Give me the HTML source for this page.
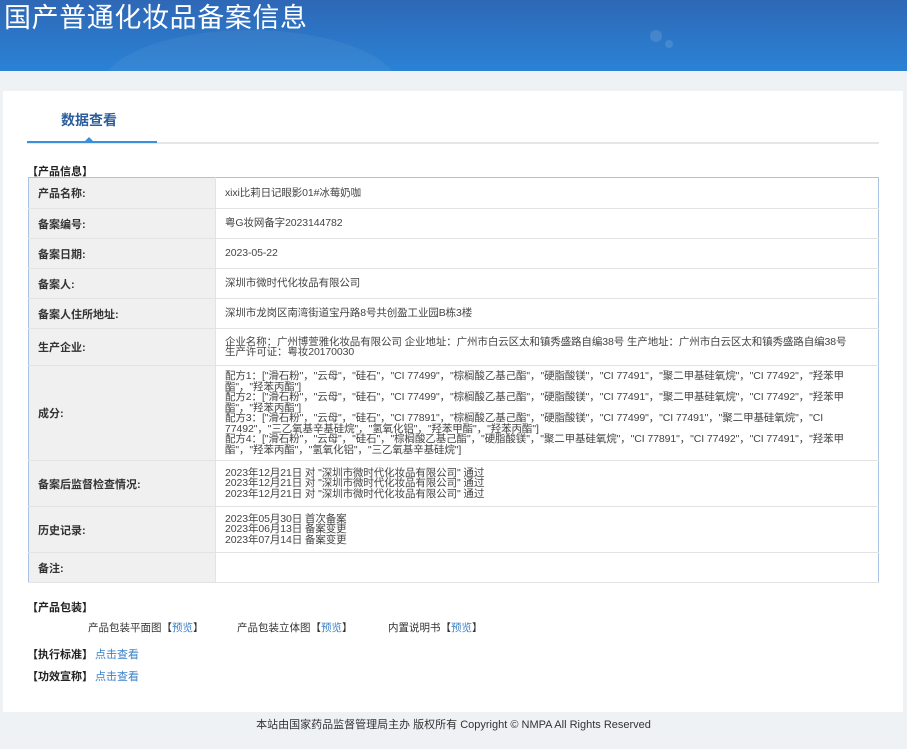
<!DOCTYPE html>
<html><head><meta charset="utf-8">
<style>
*{margin:0;padding:0;box-sizing:border-box}
body{width:907px;height:749px;background:#eff2f5;font-family:"Liberation Sans","Noto Sans CJK SC",sans-serif;color:#333;position:relative;overflow:hidden}
.hdr{position:absolute;left:0;top:0;width:907px;height:71px;background:linear-gradient(180deg,#2e67b6 0%,#2c78c9 60%,#2a82d4 100%);overflow:hidden}
.hdr h1{position:absolute;left:4px;top:-2px;font-size:27px;line-height:36px;font-weight:normal;color:#fff;letter-spacing:0.6px;font-family:"Noto Sans CJK SC",sans-serif}
.blob{position:absolute;border-radius:50%;background:rgba(255,255,255,0.05)}
.panel{position:absolute;left:3px;top:91px;width:900px;height:621px;background:#fff}
.tab{position:absolute;left:61px;top:110px;font-size:14px;font-weight:bold;color:#2c5d9b}
.tl{position:absolute;left:27px;top:142px;width:852px;height:2px;background:#e6e6e6}
.tb{position:absolute;left:27px;top:141px;width:130px;height:2px;background:#3c8fdb}
.tri{position:absolute;left:85px;top:137px;width:0;height:0;border-left:4px solid transparent;border-right:4px solid transparent;border-bottom:4px solid #3c8fdb}
.sec{position:absolute;font-size:11px;font-weight:bold;color:#222}
table{position:absolute;left:28px;top:177px;width:851px;border-collapse:collapse;border:1px solid #a8c3e6;font-size:10.5px}
td{border-bottom:1px solid #e3e3e3;vertical-align:middle}
td.l{width:187px;background:#f0f0f0;font-weight:bold;padding-left:9px;color:#333;font-size:11px;border-right:1px solid #e3e3e3}
td.v{padding-left:9px;padding-right:20px;color:#444;line-height:10.5px;letter-spacing:-0.1px}
a{color:#3b82c8;text-decoration:none}
.foot{position:absolute;top:716px;left:0;width:907px;text-align:center;font-size:11px;color:#333}
</style></head><body>
<div class="hdr"><div class="blob" style="left:100px;top:30px;width:300px;height:120px"></div><div class="blob" style="left:650px;top:30px;width:12px;height:12px;background:rgba(255,255,255,0.12)"></div><div class="blob" style="left:665px;top:40px;width:8px;height:8px;background:rgba(255,255,255,0.12)"></div><h1>国产普通化妆品备案信息</h1></div>
<div class="panel"></div>
<div class="tab">数据查看</div>
<div class="tl"></div><div class="tb"></div><div class="tri"></div>
<div class="sec" style="left:27px;top:163px">【产品信息】</div>
<table>
<tr style="height:31px"><td class="l">产品名称:</td><td class="v">xixi比莉日记眼影01#冰莓奶咖</td></tr>
<tr style="height:30px"><td class="l">备案编号:</td><td class="v">粤G妆网备字2023144782</td></tr>
<tr style="height:30px"><td class="l">备案日期:</td><td class="v">2023-05-22</td></tr>
<tr style="height:30px"><td class="l">备案人:</td><td class="v">深圳市微时代化妆品有限公司</td></tr>
<tr style="height:30px"><td class="l">备案人住所地址:</td><td class="v">深圳市龙岗区南湾街道宝丹路8号共创盈工业园B栋3楼</td></tr>
<tr style="height:37px"><td class="l">生产企业:</td><td class="v">企业名称：广州博萱雅化妆品有限公司 企业地址：广州市白云区太和镇秀盛路自编38号 生产地址：广州市白云区太和镇秀盛路自编38号 生产许可证：粤妆20170030</td></tr>
<tr style="height:95px"><td class="l">成分:</td><td class="v">配方1：["滑石粉"，"云母"，"硅石"，"CI 77499"，"棕榈酸乙基己酯"，"硬脂酸镁"，"CI 77491"，"聚二甲基硅氧烷"，"CI 77492"，"羟苯甲酯"，"羟苯丙酯"]<br>配方2：["滑石粉"，"云母"，"硅石"，"CI 77499"，"棕榈酸乙基己酯"，"硬脂酸镁"，"CI 77491"，"聚二甲基硅氧烷"，"CI 77492"，"羟苯甲酯"，"羟苯丙酯"]<br>配方3：["滑石粉"，"云母"，"硅石"，"CI 77891"，"棕榈酸乙基己酯"，"硬脂酸镁"，"CI 77499"，"CI 77491"，"聚二甲基硅氧烷"，"CI 77492"，"三乙氧基辛基硅烷"，"氢氧化铝"，"羟苯甲酯"，"羟苯丙酯"]<br>配方4：["滑石粉"，"云母"，"硅石"，"棕榈酸乙基己酯"，"硬脂酸镁"，"聚二甲基硅氧烷"，"CI 77891"，"CI 77492"，"CI 77491"，"羟苯甲酯"，"羟苯丙酯"，"氢氧化铝"，"三乙氧基辛基硅烷"]</td></tr>
<tr style="height:46px"><td class="l">备案后监督检查情况:</td><td class="v">2023年12月21日 对 "深圳市微时代化妆品有限公司" 通过<br>2023年12月21日 对 "深圳市微时代化妆品有限公司" 通过<br>2023年12月21日 对 "深圳市微时代化妆品有限公司" 通过</td></tr>
<tr style="height:46px"><td class="l">历史记录:</td><td class="v">2023年05月30日 首次备案<br>2023年06月13日 备案变更<br>2023年07月14日 备案变更</td></tr>
<tr style="height:30px"><td class="l">备注:</td><td class="v"></td></tr>
</table>
<div class="sec" style="left:27px;top:599px">【产品包装】</div>
<div style="position:absolute;left:88px;top:620px;font-size:10.5px;color:#333">产品包装平面图【<a>预览</a>】</div>
<div style="position:absolute;left:237px;top:620px;font-size:10.5px;color:#333">产品包装立体图【<a>预览</a>】</div>
<div style="position:absolute;left:388px;top:620px;font-size:10.5px;color:#333">内置说明书【<a>预览</a>】</div>
<div class="sec" style="left:27px;top:646px">【执行标准】<a style="font-weight:normal;margin-left:2px">点击查看</a></div>
<div class="sec" style="left:27px;top:668px">【功效宣称】<a style="font-weight:normal;margin-left:2px">点击查看</a></div>
<div class="foot">本站由国家药品监督管理局主办 版权所有 Copyright © NMPA All Rights Reserved</div>
</body></html>
